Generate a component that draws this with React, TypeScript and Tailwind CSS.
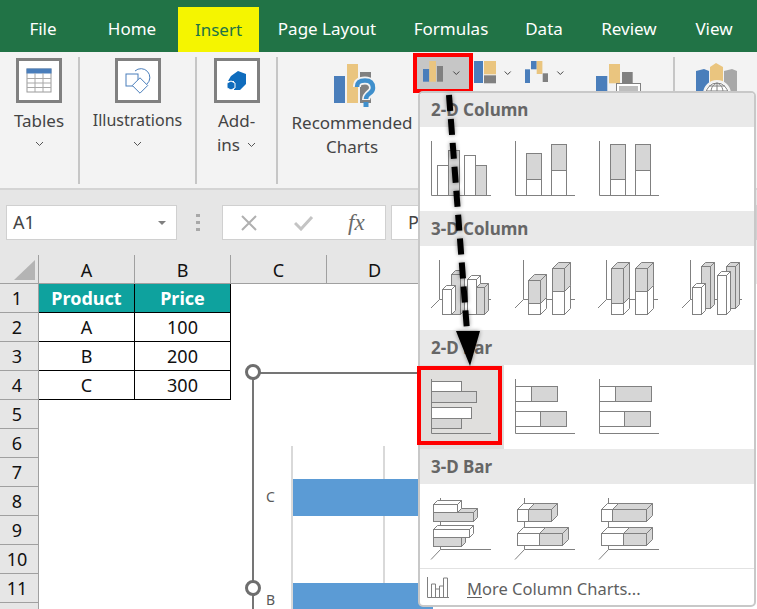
import React from "react";

const S = "#808080";
const G = "#d6d6d6";
const W = "#ffffff";

function Box3({ x, y, w, h, d = 4, fill = W }: { x: number; y: number; w: number; h: number; d?: number; fill?: string }) {
  return (
    <g fill={fill} stroke={S} strokeWidth="1">
      <polygon points={`${x},${y} ${x + d},${y - d} ${x + w + d},${y - d} ${x + w},${y}`} />
      <polygon points={`${x + w},${y} ${x + w + d},${y - d} ${x + w + d},${y + h - d} ${x + w},${y + h}`} />
      <rect x={x} y={y} width={w} height={h} />
    </g>
  );
}

function R({ x, y, w, h, fill = W }: { x: number; y: number; w: number; h: number; fill?: string }) {
  return <rect x={x} y={y} width={w} height={h} fill={fill} stroke={S} strokeWidth="1" />;
}

function Icon({ children }: { children: React.ReactNode }) {
  return (
    <svg width="62" height="64" viewBox="0 0 62 64" className="overflow-visible block">
      {children}
    </svg>
  );
}

const Axis2 = () => <path d="M.5 0V54.5H60" fill="none" stroke={S} strokeWidth="1" />;
const Axis3 = () => <path d="M0 48L8.5 39.5H60M8.5 39.5V0" fill="none" stroke={S} strokeWidth="1" />;
const Axis3Bar = () => <path d="M0 61.5L9.5 51.5H60M9.5 51.5V0" fill="none" stroke={S} strokeWidth="1" />;

const col2 = [
  <Icon key="a">
    <Axis2 />
    <R x={6.5} y={24.5} w={11} h={30} />
    <R x={17.5} y={9.5} w={11} h={45} fill={G} />
    <R x={33.5} y={14.5} w={11} h={40} />
    <R x={44.5} y={24.5} w={11} h={30} fill={G} />
  </Icon>,
  <Icon key="b">
    <Axis2 />
    <R x={11.5} y={12.5} w={15} h={26} fill={G} />
    <R x={11.5} y={38.5} w={15} h={16} />
    <R x={36.5} y={3.5} w={15} h={26} fill={G} />
    <R x={36.5} y={29.5} w={15} h={25} />
  </Icon>,
  <Icon key="c">
    <Axis2 />
    <R x={11.5} y={3.5} w={15} h={35} fill={G} />
    <R x={11.5} y={38.5} w={15} h={16} />
    <R x={36.5} y={3.5} w={15} h={26} fill={G} />
    <R x={36.5} y={29.5} w={15} h={25} />
  </Icon>,
];

const col3 = [
  <Icon key="a">
    <Axis3 />
    <Box3 x={20.5} y={14.5} w={9} h={40} fill={G} />
    <Box3 x={36.5} y={19.5} w={9} h={35} />
    <Box3 x={11.5} y={29.5} w={9} h={25} />
    <Box3 x={45.5} y={27.5} w={8} h={27} fill={G} />
  </Icon>,
  <Icon key="b">
    <Axis3 />
    <Box3 x={13.5} y={43.5} w={12} h={11} d={6} />
    <Box3 x={13.5} y={20.5} w={12} h={23} d={6} fill={G} />
    <Box3 x={37.5} y={31.5} w={12} h={23} d={6} />
    <Box3 x={37.5} y={8.5} w={12} h={23} d={6} fill={G} />
  </Icon>,
  <Icon key="c">
    <Axis3 />
    <Box3 x={13.5} y={43.5} w={12} h={11} d={6} />
    <Box3 x={13.5} y={8.5} w={12} h={35} d={6} fill={G} />
    <Box3 x={37.5} y={31.5} w={12} h={23} d={6} />
    <Box3 x={37.5} y={8.5} w={12} h={23} d={6} fill={G} />
  </Icon>,
  <Icon key="d">
    <Axis3 />
    <Box3 x={19.5} y={6.5} w={9} h={42} fill={G} />
    <Box3 x={44.5} y={6.5} w={9} h={42} fill={G} />
    <Box3 x={10.5} y={27.5} w={9} h={27} />
    <Box3 x={35.5} y={15.5} w={9} h={39} />
  </Icon>,
];

const bar2 = [
  <Icon key="a">
    <Axis2 />
    <R x={0.5} y={2.5} w={30} h={10} />
    <R x={0.5} y={12.5} w={45} h={11} fill={G} />
    <R x={0.5} y={28.5} w={40} h={11} />
    <R x={0.5} y={39.5} w={30} h={10} fill={G} />
  </Icon>,
  <Icon key="b">
    <Axis2 />
    <R x={0.5} y={7.5} w={16} h={15} />
    <R x={16.5} y={7.5} w={26} h={15} fill={G} />
    <R x={0.5} y={32.5} w={25} h={15} />
    <R x={25.5} y={32.5} w={26} h={15} fill={G} />
  </Icon>,
  <Icon key="c">
    <Axis2 />
    <R x={0.5} y={7.5} w={16} h={15} />
    <R x={16.5} y={7.5} w={36} h={15} fill={G} />
    <R x={0.5} y={32.5} w={25} h={15} />
    <R x={25.5} y={32.5} w={26} h={15} fill={G} />
  </Icon>,
];

const bar3 = [
  <Icon key="a">
    <Axis3Bar />
    <Box3 x={2.5} y={14.5} w={40} h={9} d={4} fill={G} />
    <Box3 x={2.5} y={6.5} w={24} h={8} d={4} />
    <Box3 x={2.5} y={39.5} w={28} h={9} d={4} fill={G} />
    <Box3 x={2.5} y={31.5} w={36} h={8} d={4} />
  </Icon>,
  <Icon key="b">
    <Axis3Bar />
    <Box3 x={2.5} y={11.5} w={11} h={12} d={6} />
    <Box3 x={13.5} y={11.5} w={23} h={12} d={6} fill={G} />
    <Box3 x={2.5} y={35.5} w={22} h={12} d={6} />
    <Box3 x={24.5} y={35.5} w={23} h={12} d={6} fill={G} />
  </Icon>,
  <Icon key="c">
    <Axis3Bar />
    <Box3 x={2.5} y={11.5} w={11} h={12} d={6} />
    <Box3 x={13.5} y={11.5} w={34} h={12} d={6} fill={G} />
    <Box3 x={2.5} y={35.5} w={22} h={12} d={6} />
    <Box3 x={24.5} y={35.5} w={23} h={12} d={6} fill={G} />
  </Icon>,
];

function Chev({ x, y }: { x: number; y: number }) {
  return <path d={`M${x - 3} ${y - 1.5}L${x} ${y + 1.5}L${x + 3} ${y - 1.5}`} fill="none" stroke="#444" strokeWidth="1" />;
}

function Chevron({ className = "" }: { className?: string }) {
  return (
    <svg width="9" height="6" viewBox="0 0 9 6" className={className}>
      <path d="M1 1L4.5 4.5L8 1" fill="none" stroke="#555" strokeWidth="1" />
    </svg>
  );
}

function Header({ title, tall = true }: { title: string; tall?: boolean }) {
  return (
    <div className={`flex items-center bg-[#e9e9e9] pl-[11px] text-[17px] font-bold text-[#666666] ${tall ? "h-[35px]" : "h-[34px]"}`}>
      {title}
    </div>
  );
}

function Cells({ items }: { items: React.ReactNode[] }) {
  return (
    <div className="flex h-[84px] bg-white">
      {items.map((it, i) => (
        <div key={i} className="w-[84px] pl-[11px] pt-[14px]">
          {it}
        </div>
      ))}
    </div>
  );
}

function RibbonBox({ children }: { children: React.ReactNode }) {
  return <div className="flex h-[45px] w-[46px] items-center justify-center border-[3px] border-[#808080] bg-white">{children}</div>;
}

const tabClass = "flex items-center justify-center whitespace-nowrap text-white";

export default function App() {
  return (
    <div className="relative h-[609px] w-[757px] overflow-hidden bg-white font-['Noto_Sans',sans-serif] text-[17px]">
      {/* Tabs */}
      <div className="flex h-[52px] bg-[#217346]">
        <div className={`${tabClass} w-[86px] pt-[6px]`}>File</div>
        <div className={`${tabClass} w-[92px] pt-[6px]`}>Home</div>
        <div className="mt-[7px] flex w-[81px] items-center justify-center bg-[#f5f500] text-[#217346]">Insert</div>
        <div className={`${tabClass} w-[136px] pt-[6px]`}>Page Layout</div>
        <div className={`${tabClass} ml-[14px] w-[84px] pt-[6px]`}>Formulas</div>
        <div className={`${tabClass} ml-[21px] w-[60px] pt-[6px]`}>Data</div>
        <div className={`${tabClass} ml-[15px] w-[80px] pt-[6px]`}>Review</div>
        <div className={`${tabClass} ml-[15px] w-[60px] pt-[6px]`}>View</div>
      </div>

      {/* Ribbon */}
      <div className="flex h-[138px] border-b-2 border-[#d4d4d4] bg-[#f3f3f3] pb-[4px] pt-[5px] leading-[25px] text-[#444444]">
        <div className="flex w-[80px] flex-col items-center border-r-2 border-[#c6c6c6] pt-[1px]">
          <RibbonBox>
            <svg width="26" height="25" viewBox="0 0 26 25">
              <rect x="1" y="1" width="24" height="23" fill="#fff" stroke="#9a9a9a" />
              <rect x="0.5" y="0.5" width="25" height="5" fill="#4a7ebb" />
              <path d="M1 10.5H25M1 15H25M1 19.5H25M9 5V24M17 5V24" stroke="#a8a8a8" fill="none" />
            </svg>
          </RibbonBox>
          <div className="mt-[5px]">Tables</div>
          <Chevron className="mt-[8px]" />
        </div>
        <div className="flex w-[117px] flex-col items-center border-r-2 border-[#c6c6c6] pt-[1px]">
          <RibbonBox>
            <svg width="26" height="26" viewBox="0 0 26 26">
              <rect x="1" y="6" width="12" height="12" fill="none" stroke="#4a7ebb" />
              <path d="M10 3A8 8 0 0 1 22 16" fill="none" stroke="#4a7ebb" />
              <path d="M15 9.8L22.7 17.5L15 25.2L7.3 17.5Z" fill="#fff" stroke="#4a7ebb" />
            </svg>
          </RibbonBox>
          <div className="mt-[5px] text-[16px]">Illustrations</div>
          <Chevron className="mt-[8px]" />
        </div>
        <div className="flex w-[81px] flex-col items-center border-r-2 border-[#c6c6c6] pt-[1px]">
          <RibbonBox>
            <svg width="22" height="22" viewBox="0 0 22 22">
              <path d="M12 1L20 4V14L14 20H8V11H2L5 6Z" fill="#0f6cbd" />
              <path d="M5 11L9 13V18L5 20L1 18V13Z" fill="#0f6cbd" stroke="#fff" />
            </svg>
          </RibbonBox>
          <div className="mt-[5px]">Add-</div>
          <div className="-mt-px flex items-center gap-[7px]">
            ins <Chevron />
          </div>
        </div>
        <div className="flex w-[135px] flex-col items-center pl-[13px]">
          <svg width="46" height="44" viewBox="0 0 46 44" className="ml-[8px] mt-[6px] overflow-visible">
            <rect x="1" y="13" width="11" height="27" fill="#4a7ebb" />
            <rect x="14" y="1" width="11" height="39" fill="#eac57f" />
            <rect x="27" y="9" width="11" height="31" fill="#808080" />
            <path d="M24 24C24 18 28 17.5 32 17.5C38 17.5 40 21 40 25C40 31 33 30 33 37" fill="none" stroke="#f3f3f3" strokeWidth="8" />
            <path d="M24 24C24 18 28 17.5 32 17.5C38 17.5 40 21 40 25C40 31 33 30 33 36" fill="none" stroke="#3f8fcc" strokeWidth="4.5" />
            <rect x="30.5" y="39" width="5" height="5" fill="#3f8fcc" />
          </svg>
          <div className="mt-[3px] whitespace-nowrap">Recommended</div>
          <div className="-mt-px">Charts</div>
        </div>
        <div className="-mt-[4px] flex items-start">
          <div className="h-[40px] w-[60px] border-4 border-[#ff0000] bg-[#c6c6c6]">
            <svg width="52" height="32" viewBox="1 1 52 32" className="block">
              <rect x="7" y="13" width="6.3" height="12.7" fill="#4a7ebb" />
              <rect x="13.3" y="5" width="6.7" height="20.7" fill="#eac57f" />
              <rect x="21" y="10" width="6" height="15.7" fill="#808080" />
              <Chev x={40.3} y={17} />
            </svg>
          </div>
          <svg width="47" height="40" viewBox="0 0 47 40" className="block">
            <rect x="1" y="8" width="9" height="22" fill="#4a7ebb" />
            <rect x="11" y="8" width="12" height="13.3" fill="#eac57f" />
            <rect x="11" y="22.3" width="12" height="8" fill="#808080" />
            <Chev x={34.7} y={20} />
          </svg>
          <svg width="50" height="40" viewBox="0 0 50 40" className="block">
            <rect x="5" y="16.3" width="5" height="13.7" fill="#4a7ebb" />
            <rect x="11" y="8" width="5.7" height="8.3" fill="#4a7ebb" />
            <rect x="16.7" y="8" width="5.7" height="13" fill="#eac57f" />
            <rect x="22.7" y="20.3" width="5.3" height="8.7" fill="#808080" />
            <Chev x={40.3} y={20} />
          </svg>
          <svg width="103" height="40" viewBox="0 0 103 40" className="block">
            <rect x="26" y="23" width="11.3" height="15" fill="#4a7ebb" />
            <rect x="39" y="11" width="11" height="19.3" fill="#eac57f" />
            <rect x="52" y="19" width="10.7" height="11.3" fill="#808080" />
            <rect x="46.5" y="30.5" width="24" height="8" fill="#fff" stroke="#808080" />
            <rect x="49" y="33" width="19" height="6" fill="#bdbdbd" />
          </svg>
          <div className="mt-[4px] h-[36px] w-[2px] bg-[#c6c6c6]" />
          <svg width="82" height="40" viewBox="0 0 82 40" className="block">
            <path d="M21 18L29 16L34 18V38H21Z" fill="#4a7ebb" />
            <path d="M35 14L41 10L48 14V38H35Z" fill="#eac57f" />
            <path d="M49 18L57 16L62 18V38H49Z" fill="#a8a8a8" />
            <circle cx="42" cy="41" r="13" fill="#fff" stroke="#f3f3f3" strokeWidth="2" />
            <circle cx="42" cy="41" r="11" fill="#fff" stroke="#808080" />
            <path d="M31 38H53M34 33H50M42 30V40M36 40C36 34 38 32 42 30C46 32 48 34 48 40" fill="none" stroke="#808080" />
          </svg>
        </div>
      </div>

      {/* Formula bar */}
      <div className="flex h-[65px] items-start bg-[#e6e6e6] pt-[15px]">
        <div className="ml-[6px] flex h-[35px] w-[171px] items-center justify-between border border-[#d0d0d0] bg-white pl-[6px] pr-[10px] text-[18px] text-[#444444]">
          A1
          <span className="h-0 w-0 border-x-[4px] border-t-[4px] border-x-transparent border-t-[#808080]" />
        </div>
        <div className="ml-[19px] mt-[9px] flex flex-col gap-[4px]">
          <span className="h-[3px] w-[4px] bg-[#a8a8a8]" />
          <span className="h-[3px] w-[4px] bg-[#a8a8a8]" />
          <span className="h-[3px] w-[4px] bg-[#a8a8a8]" />
        </div>
        <div className="ml-[22px] flex h-[35px] w-[164px] items-center border border-[#d0d0d0] bg-white">
          <svg width="16" height="16" viewBox="0 0 16 16" className="ml-[18px]">
            <path d="M1 1L15 15M15 1L1 15" stroke="#b0b0b0" strokeWidth="2" fill="none" />
          </svg>
          <svg width="20" height="16" viewBox="0 0 20 16" className="ml-[37px]">
            <path d="M1 8L7 14L18 2" stroke="#c4c4c4" strokeWidth="3" fill="none" />
          </svg>
          <span className="ml-[34px] font-['Liberation_Serif',serif] text-[23px] italic leading-none text-[#6a6a6a]">fx</span>
        </div>
        <div className="ml-[5px] flex h-[35px] flex-1 items-center border border-[#d0d0d0] bg-white pl-[16px] text-[18px] text-[#444444]">P</div>
      </div>

      {/* Sheet */}
      <div className="text-[18px] leading-none text-[#111111]">
        <div className="flex h-[29px] bg-[#e6e6e6]">
          <div className="flex w-[39px] items-end justify-end border-b border-r border-[#a0a0a0] pb-[3px] pr-[3px]">
            <span className="h-0 w-0 border-b-[20px] border-l-[21px] border-b-[#b4b4b4] border-l-transparent" />
          </div>
          {["A", "B", "C", "D"].map((c) => (
            <div key={c} className="flex w-[96px] items-center justify-center border-b border-r border-[#a0a0a0] pt-[2px]">
              {c}
            </div>
          ))}
        </div>
        <div className="flex">
          <div className="w-[39px] shrink-0">
            {[1, 2, 3, 4, 5, 6, 7, 8, 9, 10, 11].map((n) => (
              <div key={n} className="flex h-[29px] items-center justify-center border-b border-r border-[#a0a0a0] bg-[#e6e6e6] pr-[4px]">
                {n}
              </div>
            ))}
            <div className="h-[29px] border-r border-[#a0a0a0] bg-[#e6e6e6]" />
          </div>
          <div className="grid h-fit w-[192px] grid-cols-2 border-b border-black">
            <div className="flex h-[29px] items-center justify-center border-b border-r border-black bg-[#0ea29e] font-bold text-white">Product</div>
            <div className="flex h-[29px] items-center justify-center border-b border-r border-black bg-[#0ea29e] font-bold text-white">Price</div>
            <div className="flex h-[29px] items-center justify-center border-b border-r border-black">A</div>
            <div className="flex h-[29px] items-center justify-center border-b border-r border-black">100</div>
            <div className="flex h-[29px] items-center justify-center border-b border-r border-black">B</div>
            <div className="flex h-[29px] items-center justify-center border-b border-r border-black">200</div>
            <div className="flex h-[28px] items-center justify-center border-r border-black">C</div>
            <div className="flex h-[28px] items-center justify-center border-r border-black">300</div>
          </div>
        </div>
      </div>

      {/* Chart */}
      <div className="absolute left-[252px] top-[372px] h-[300px] w-[500px] border-l-2 border-t-2 border-[#757575] bg-white">
        <svg width="200" height="240" viewBox="0 0 200 240" className="absolute left-0 top-0 overflow-visible">
          <path d="M38 72V240M130 72V240" stroke="#d9d9d9" strokeWidth="2" fill="none" />
          <rect x="39" y="105" width="140" height="37" fill="#5b9bd5" />
          <rect x="39" y="209" width="140" height="37" fill="#5b9bd5" />
        </svg>
        <span className="absolute left-[12px] top-[116px] text-[14px] leading-none text-[#595959]">C</span>
        <span className="absolute left-[12px] top-[219px] text-[14px] leading-none text-[#595959]">B</span>
      </div>
      <span className="absolute left-[245px] top-[364px] h-[16px] w-[16px] rounded-full border-[3px] border-[#6e6e6e] bg-white" />
      <span className="absolute left-[245px] top-[580px] h-[16px] w-[16px] rounded-full border-[3px] border-[#6e6e6e] bg-white" />

      {/* Gallery menu */}
      <div className="absolute left-[418px] top-[91px] h-[516px] w-[338px] overflow-hidden rounded-[5px] border-2 border-[#c8c8c8] bg-white">
        <Header title="2-D Column" tall={false} />
        <Cells items={col2} />
        <Header title="3-D Column" />
        <Cells items={col3} />
        <Header title="2-D Bar" />
        <div className="flex h-[84px] bg-white">
          <div className="w-[84px] bg-[#e0dfdd] pl-[11px] pt-[14px]">{bar2[0]}</div>
          <div className="w-[84px] pl-[11px] pt-[14px]">{bar2[1]}</div>
          <div className="w-[84px] pl-[11px] pt-[14px]">{bar2[2]}</div>
        </div>
        <Header title="3-D Bar" />
        <Cells items={bar3} />
        <div className="flex h-[37px] items-center border-t border-[#e2e2e2] pl-[7px] text-[16.5px] text-[#5f5f5f]">
          <svg width="23" height="21" viewBox="0 0 23 21">
            <path d="M.5 0V20.5H22" fill="none" stroke={S} />
            <path d="M4.5 20V7H8.5V20M8.5 20V12H12.5V20M12.5 20V9H16.5V20M16.5 20V1H20.5V20" fill="none" stroke={S} />
          </svg>
          <span className="ml-[17px] mt-[5px]">
            <span className="underline underline-offset-2">M</span>ore Column Charts...
          </span>
        </div>
      </div>

      {/* Selection highlight */}
      <div className="absolute left-[417px] top-[366px] h-[79px] w-[85px] border-4 border-[#ff0000]" />

      {/* Arrow */}
      <svg width="757" height="609" viewBox="0 0 757 609" className="pointer-events-none absolute left-0 top-0 drop-shadow-[0_0_2px_rgba(0,0,0,0.45)]">
        <line x1="449" y1="95" x2="467" y2="331" stroke="#000" strokeWidth="6" strokeDasharray="16 8" />
        <polygon points="456,331 480,331 470,366" fill="#000" />
      </svg>
    </div>
  );
}
